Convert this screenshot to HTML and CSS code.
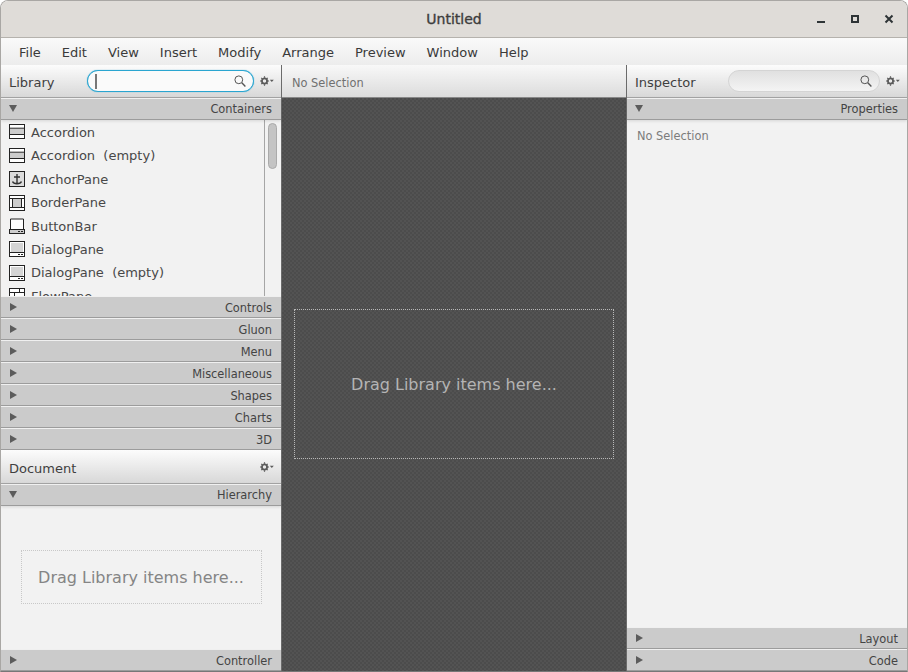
FILE: index.html
```html
<!DOCTYPE html>
<html>
<head>
    <title>Untitled</title>
    <link rel="stylesheet" href="styles.css">
</head>
<body>
    <svg class="defs" width="0" height="0">
        <symbol id="gear" viewBox="0 0 14 10">
            <circle cx="4.5" cy="5" r="2.6" fill="none" stroke="#5a5a5a" stroke-width="1.8"/>
            <path d="M4.5 0.200v1.600M4.500 8.200v1.600M0 5h1.600M7.400 5h1.600M1.300 1.800l1.100 1.100M6.600 7.100l1.100 1.100M1.300 8.200l1.100-1.100M6.600 2.900l1.100-1.100" stroke="#5a5a5a" stroke-width="1.200"/>
            <path d="M9.800 3.800h4l-2 2.200z" fill="#5a5a5a"/>
        </symbol>
        <symbol id="search" viewBox="0 0 12 12">
            <circle cx="4.800" cy="4.800" r="3.900" fill="none" stroke="#555" stroke-width="1"/>
            <path d="M7.800 7.800l3.600 3.600" stroke="#555" stroke-width="1.400"/>
        </symbol>
        <symbol id="accordion" viewBox="0 0 16 16">
            <rect x="0.500" y="0.500" width="15" height="14" fill="#fff" stroke="#222"/>
            <rect x="1" y="4.500" width="14" height="6" fill="#ccc"/>
            <path d="M1 4.200h14M1 10.500h14" stroke="#222"/>
        </symbol>
        <symbol id="anchor" viewBox="0 0 16 16">
            <rect x="0.500" y="0.500" width="15" height="15" fill="#dcdcdc" stroke="#222"/>
            <path d="M8 3v9.500M5 6h6M3.500 10.500c0.800 1.800 2.500 2.200 4.500 2.200s3.700-0.400 4.500-2.200" fill="none" stroke="#333" stroke-width="1.400"/>
        </symbol>
        <symbol id="border" viewBox="0 0 16 16">
            <rect x="0.500" y="0.500" width="15" height="15" fill="#fff" stroke="#222"/>
            <rect x="3.500" y="3.500" width="9" height="9" fill="#ccc"/>
            <path d="M1 3.500h14M1 12.500h14M3.500 3.500v9M12.500 3.500v9" stroke="#222"/>
        </symbol>
        <symbol id="buttonbar" viewBox="0 0 16 16">
            <path d="M1.500 11.500v-10.500h13v10.500" fill="#fff" stroke="#222"/>
            <rect x="0.500" y="11.500" width="15" height="4" fill="#ccc" stroke="#222"/>
            <path d="M9 13.500h2M12 13.500h2" stroke="#222"/>
        </symbol>
        <symbol id="dialog" viewBox="0 0 16 16">
            <rect x="0.500" y="0.500" width="15" height="15" fill="#fff" stroke="#222"/>
            <rect x="2" y="2" width="12" height="9" fill="#d4d4d4"/>
            <path d="M1 11.500h14M9 13.500h2M12 13.500h2" stroke="#222"/>
        </symbol>
        <symbol id="flow" viewBox="0 0 16 16">
            <rect x="0.500" y="0.500" width="15" height="15" fill="#fff" stroke="#222"/>
            <path d="M1 4.500h14M1 9.500h14M10.500 1v3.500M5.500 4.500v5" stroke="#222"/>
        </symbol>
    </svg>

    <div class="window">
        <div class="titlebar">
            <span class="title">Untitled</span>
            <div class="win-buttons">
                <svg width="12" height="12" viewBox="0 0 12 12"><path d="M2 9h8" stroke="#2e3436" stroke-width="2"/></svg>
                <svg width="12" height="12" viewBox="0 0 12 12"><rect x="3" y="3" width="6" height="6" fill="none" stroke="#2e3436" stroke-width="2"/></svg>
                <svg width="12" height="12" viewBox="0 0 12 12"><path d="M2.500 2.500l7 7M9.500 2.500l-7 7" stroke="#2e3436" stroke-width="2"/></svg>
            </div>
        </div>

        <div class="menubar">
            <span>File</span>
            <span>Edit</span>
            <span>View</span>
            <span>Insert</span>
            <span>Modify</span>
            <span>Arrange</span>
            <span>Preview</span>
            <span>Window</span>
            <span>Help</span>
        </div>

        <div class="panels">
            <div class="side left">
                <div class="panel-head">
                    <span class="panel-title">Library</span>
                    <div class="search focused">
                        <span class="caret"></span>
                        <svg class="search-icon" width="12" height="12"><use href="#search"/></svg>
                    </div>
                    <svg class="gear" width="14" height="10"><use href="#gear"/></svg>
                </div>
                <div class="section open"><span class="arrow"></span>Containers</div>
                <div class="lib-list">
                    <div class="lib-items">
                        <div class="lib-item"><svg width="16" height="16"><use href="#accordion"/></svg>Accordion</div>
                        <div class="lib-item"><svg width="16" height="16"><use href="#accordion"/></svg>Accordion&nbsp; (empty)</div>
                        <div class="lib-item"><svg width="16" height="16"><use href="#anchor"/></svg>AnchorPane</div>
                        <div class="lib-item"><svg width="16" height="16"><use href="#border"/></svg>BorderPane</div>
                        <div class="lib-item"><svg width="16" height="16"><use href="#buttonbar"/></svg>ButtonBar</div>
                        <div class="lib-item"><svg width="16" height="16"><use href="#dialog"/></svg>DialogPane</div>
                        <div class="lib-item"><svg width="16" height="16"><use href="#dialog"/></svg>DialogPane&nbsp; (empty)</div>
                        <div class="lib-item"><svg width="16" height="16"><use href="#flow"/></svg>FlowPane</div>
                    </div>
                    <div class="scrollbar"><div class="thumb"></div></div>
                </div>
                <div class="section"><span class="arrow"></span>Controls</div>
                <div class="section"><span class="arrow"></span>Gluon</div>
                <div class="section"><span class="arrow"></span>Menu</div>
                <div class="section"><span class="arrow"></span>Miscellaneous</div>
                <div class="section"><span class="arrow"></span>Shapes</div>
                <div class="section"><span class="arrow"></span>Charts</div>
                <div class="section"><span class="arrow"></span>3D</div>
                <div class="panel-head doc-head">
                    <span class="panel-title">Document</span>
                    <svg class="gear" width="14" height="10"><use href="#gear"/></svg>
                </div>
                <div class="section open"><span class="arrow"></span>Hierarchy</div>
                <div class="section-body centered">
                    <div class="drop-small">Drag Library items here...</div>
                </div>
                <div class="section"><span class="arrow"></span>Controller</div>
            </div>

            <div class="center">
                <div class="crumb">No Selection</div>
                <div class="canvas">
                    <div class="drop-big">Drag Library items here...</div>
                </div>
            </div>

            <div class="side right">
                <div class="panel-head">
                    <span class="panel-title">Inspector</span>
                    <div class="search">
                        <svg class="search-icon" width="12" height="12"><use href="#search"/></svg>
                    </div>
                    <svg class="gear" width="14" height="10"><use href="#gear"/></svg>
                </div>
                <div class="section open"><span class="arrow"></span>Properties</div>
                <div class="section-body">
                    <div class="no-selection">No Selection</div>
                </div>
                <div class="section"><span class="arrow"></span>Layout</div>
                <div class="section"><span class="arrow"></span>Code</div>
            </div>
        </div>
    </div>
</body>
</html>
```

FILE: styles.css
```css
html, body {
    margin: 0;
    padding: 0;
    background-color: #fff;
}

body {
    font-family: "DejaVu Sans", sans-serif;
    font-size: 13px;
    color: #3f3f3f;
}

.defs {
    position: absolute;
}

.window {
    width: 908px;
    height: 672px;
    box-sizing: border-box;
    border: 1px solid #a9a7a4;
    border-bottom-color: #777;
    border-radius: 8px 8px 0 0;
    display: flex;
    flex-direction: column;
    overflow: hidden;
}

.titlebar {
    height: 37px;
    flex: none;
    box-sizing: border-box;
    background-color: #dfdcd8;
    border-bottom: 1px solid #b5b2ad;
    display: flex;
    align-items: center;
    justify-content: center;
}

.title {
    font-size: 14px;
    -webkit-text-stroke: 0.35px #3d3d3d;
    color: #3d3d3d;
}

.win-buttons {
    position: absolute;
    top: 13px;
    right: 13px;
    display: flex;
    gap: 22px;
}

.menubar {
    height: 27px;
    flex: none;
    box-sizing: border-box;
    padding: 2px 0 0 18px;
    background: linear-gradient(#fafafa, #ececec);
    display: flex;
    align-items: center;
    gap: 21px;
    color: #3a3a3a;
}

.panels {
    flex: 1;
    min-height: 0;
    display: flex;
}

.side {
    width: 280px;
    display: flex;
    flex-direction: column;
    background-color: #f2f2f2;
}

.panel-head {
    height: 33px;
    flex: none;
    box-sizing: border-box;
    background: linear-gradient(#fcfcfc, #d8d8d8);
    border-bottom: 1px solid #a6a6a6;
    display: flex;
    align-items: center;
    padding: 0 7px 0 8px;
}

.panel-title {
    flex: 1;
    padding-top: 2px;
    color: #3f3f3f;
}

.doc-head {
    height: 34px;
    padding-top: 2px;
}

.gear {
    flex: none;
    margin-left: 6px;
    margin-top: -1px;
}

.search {
    flex: none;
    position: relative;
    width: 152px;
    height: 22px;
    box-sizing: border-box;
    border: 1px solid #d4d4d4;
    border-radius: 11px;
    background: linear-gradient(#e0e0e0, #f4f4f4);
}

.search.focused {
    width: 167px;
    border-color: #2aa5d0;
    box-shadow: 0 0 1px #2aa5d0;
    background: #fafafa;
}

.caret {
    position: absolute;
    left: 7px;
    top: 3px;
    width: 2px;
    height: 15px;
    background-color: #777;
}

.search-icon {
    position: absolute;
    right: 7px;
    top: 4px;
}

.section {
    height: 22px;
    flex: none;
    box-sizing: border-box;
    background-color: #cbcbcb;
    border-top: 1px solid #f0f0f0;
    border-bottom: 1px solid #9c9c9c;
    display: flex;
    align-items: center;
    justify-content: flex-end;
    padding: 2px 9px 0 0;
    font-size: 11.4px;
    color: #444;
}

.section.open {
    position: relative;
    padding-top: 0;
    box-shadow: 0 1px 3px rgba(0, 0, 0, 0.12);
}

.arrow {
    margin: -2px auto 0 9px;
    width: 0;
    height: 0;
    border-left: 7px solid #5c5c5c;
    border-top: 4px solid transparent;
    border-bottom: 4px solid transparent;
}

.section.open .arrow {
    border-top: 7px solid #5c5c5c;
    border-left: 4px solid transparent;
    border-right: 4px solid transparent;
    border-bottom: 0;
    margin-left: 8px;
}

.lib-list {
    height: 176px;
    flex: none;
    display: flex;
    overflow: hidden;
}

.lib-items {
    flex: 1;
    padding-top: 0.8px;
}

.lib-item {
    height: 23.4px;
    padding-left: 8px;
    display: flex;
    align-items: center;
    gap: 6px;
    white-space: nowrap;
    color: #484848;
}

.lib-item svg {
    flex: none;
}

.scrollbar {
    flex: none;
    width: 17px;
    box-sizing: border-box;
    border-left: 1px solid #a6a6a6;
    padding: 3px 4px 0 3px;
}

.thumb {
    height: 44px;
    background-color: #c4c4c4;
    border: 1px solid #aaa;
    border-radius: 5px;
}

.section-body {
    flex: 1;
    min-height: 0;
}

.centered {
    display: flex;
    align-items: center;
    justify-content: center;
}

.drop-small {
    width: 241px;
    height: 54px;
    margin-bottom: 2px;
    padding-top: 2px;
    box-sizing: border-box;
    border: 1px dotted #c8c8c8;
    display: flex;
    align-items: center;
    justify-content: center;
    font-size: 16px;
    color: #858585;
}

.no-selection {
    padding: 9px 10px;
    font-size: 11.4px;
    color: #7c7c7c;
}

.center {
    flex: 1;
    min-width: 0;
    display: flex;
    flex-direction: column;
    border-left: 1px solid #6b6b6b;
    border-right: 1px solid #6b6b6b;
}

.crumb {
    height: 33px;
    flex: none;
    box-sizing: border-box;
    background: linear-gradient(#f8f8f8, #dcdcdc);
    border-bottom: 1px solid #888;
    padding: 3px 0 0 10px;
    display: flex;
    align-items: center;
    font-size: 11.4px;
    color: #707070;
}

.canvas {
    flex: 1;
    min-height: 0;
    background-color: #4f4f4f;
    background-image: repeating-conic-gradient(#4c4c4c 0 25%, #535353 0 50%);
    background-size: 4px 4px;
    display: flex;
    align-items: center;
    justify-content: center;
}

.drop-big {
    width: 320px;
    height: 150px;
    margin-bottom: 2px;
    padding-top: 2px;
    box-sizing: border-box;
    border: 1px dotted #b8b8b8;
    display: flex;
    align-items: center;
    justify-content: center;
    font-size: 16px;
    color: #b4b4b4;
}
```
